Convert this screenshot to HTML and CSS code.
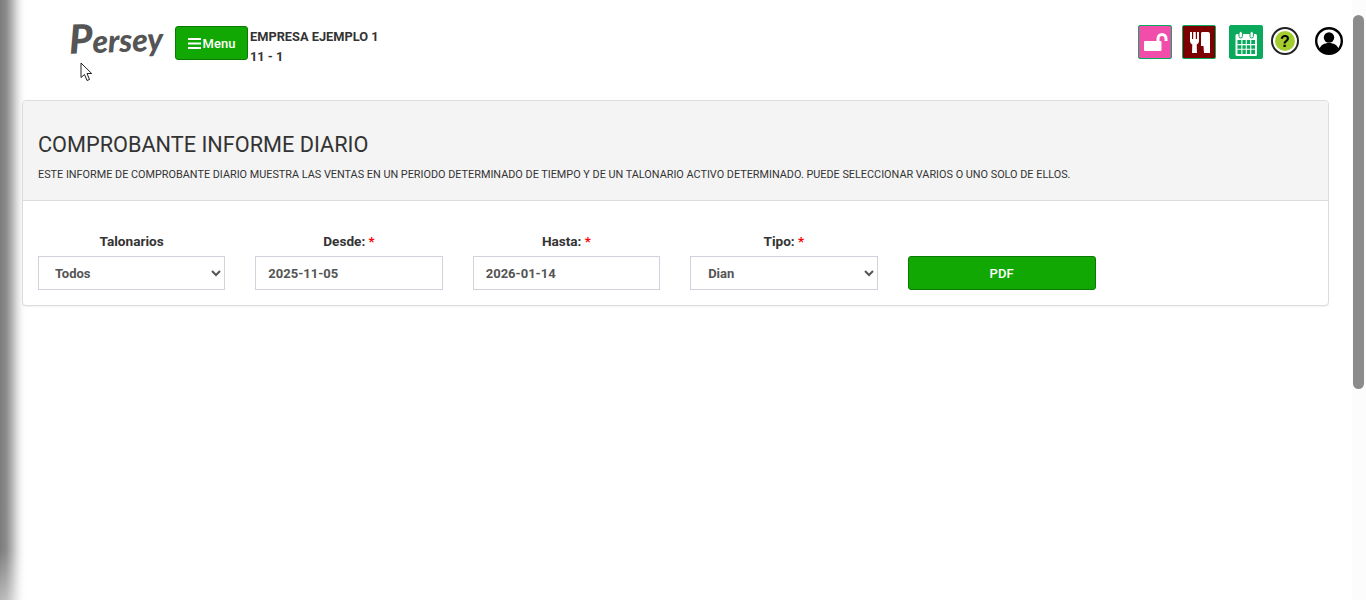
FILE: index.html
```html
<!DOCTYPE html>
<html lang="es">
<head>
<meta charset="utf-8">
<title>Comprobante informe diario</title>
<link rel="stylesheet" href="styles.css">
</head>
<body>
<div class="edge-shadow"></div>
<header class="topbar">
  <div class="brand">
    <span class="logo"><span class="logo-p">P</span>ersey</span>
  </div>
  <button class="btn-menu" type="button">
    <svg class="bars" viewBox="0 0 13 11" width="13" height="11"><path d="M0 1h13M0 5.500h13M0 10h13" stroke="#fff" stroke-width="2"/></svg>Menu
  </button>
  <div class="company">
    <div>EMPRESA EJEMPLO 1</div>
    <div>11 - 1</div>
  </div>
  <nav class="tools">
    <a class="tool tool-pink">
      <svg viewBox="0 0 32 32" width="32" height="32"><path d="M5 16a1 1 0 0 1 1-1h15.500a1 1 0 0 1 1 1v8a1 1 0 0 1-1 1H6a1 1 0 0 1-1-1z" fill="#fff"/><path d="M19 15v-2.500a4 4 0 0 1 8 0V15" fill="none" stroke="#fff" stroke-width="3"/></svg>
    </a>
    <a class="tool tool-red">
      <svg viewBox="0 0 32 32" width="32" height="32"><path d="M7 6h2v7h1.200V6h2.600v7H14V6h2v9c0 2-1.200 3-2.300 3.500L14 27H9l.3-8.500C8.200 18 7 17 7 15z" fill="#fff"/><path d="M19 6h6c1.500 0 2 1 2 2.500V27h-6l-.5-7H18V8c0-1 .3-2 1-2z" fill="#fff"/></svg>
    </a>
    <a class="tool tool-green">
      <svg viewBox="0 0 32 32" width="32" height="32"><rect x="5.500" y="8" width="21.500" height="22" rx="1.500" fill="#fff"/><rect x="9" y="5.500" width="3.400" height="6.500" rx="1.700" fill="#fff" stroke="#0aa95b"/><rect x="20" y="5.500" width="3.400" height="6.500" rx="1.700" fill="#fff" stroke="#0aa95b"/><rect x="7.500" y="14" width="17.500" height="14" fill="#0aa95b"/><path d="M7.500 18.600h17.500M7.500 23.300h17.500M11.900 14v14M16.300 14v14M20.700 14v14" stroke="#fff" stroke-width="1.100"/></svg>
    </a>
    <a class="round round-help">
      <svg viewBox="0 0 28 28" width="28" height="28"><circle cx="14" cy="14" r="13" fill="#fff" stroke="#222" stroke-width="2"/><circle cx="14" cy="14" r="10" fill="#a4cc2e"/><text x="14" y="19.500" text-anchor="middle" class="q">?</text></svg>
    </a>
    <a class="round round-user">
      <svg viewBox="0 0 28 28" width="28" height="28"><circle cx="14" cy="14" r="12.800" fill="#fff" stroke="#000" stroke-width="2.400"/><circle cx="14" cy="10.500" r="5.200" fill="#000"/><path d="M4.500 22c1-4 5-6 9.500-6s8.500 2 9.500 6a12 12 0 0 1-19 0z" fill="#000"/></svg>
    </a>
  </nav>
</header>

<main class="card">
  <section class="card-head">
    <h1>COMPROBANTE INFORME DIARIO</h1>
    <p>ESTE INFORME DE COMPROBANTE DIARIO MUESTRA LAS VENTAS EN UN PERIODO DETERMINADO DE TIEMPO Y DE UN TALONARIO ACTIVO DETERMINADO. PUEDE SELECCIONAR VARIOS O UNO SOLO DE ELLOS.</p>
  </section>
  <form class="card-body">
    <div class="field">
      <label>Talonarios</label>
      <select class="control select-pad"><option>Todos</option></select>
    </div>
    <div class="field">
      <label>Desde: <span class="req">*</span></label>
      <input class="control" type="text" value="2025-11-05">
    </div>
    <div class="field">
      <label>Hasta: <span class="req">*</span></label>
      <input class="control" type="text" value="2026-01-14">
    </div>
    <div class="field">
      <label>Tipo: <span class="req">*</span></label>
      <select class="control select-pad select-tipo"><option>Dian</option></select>
    </div>
    <div class="field">
      <label class="blank">&nbsp;</label>
      <button class="btn-pdf" type="button">PDF</button>
    </div>
  </form>
</main>

<svg class="cursor" viewBox="0 0 13 20" width="13" height="20"><path d="M1 1v14.500l3.500-3 2.500 6 2.500-1-2.500-6h4.700z" fill="#fff" stroke="#222" stroke-width="1"/></svg>
<div class="scrollbar"><div class="thumb"></div></div>
</body>
</html>
```
FILE: styles.css
```css
* { box-sizing: border-box; }
html, body { height: 100%; }
body {
  margin: 0;
  background: #fff;
  color: #333;
  font-family: "Roboto", "Noto Sans", sans-serif;
  font-size: 13px;
  overflow: hidden;
  padding-right: 37px;
  padding-left: 22px;
}
.edge-shadow {
  position: absolute;
  z-index: -1;
  left: 0; top: 0; bottom: 0;
  width: 26px;
  background:
    linear-gradient(to top, rgba(255,255,255,.45), rgba(255,255,255,0) 50px),
    linear-gradient(to right, #7c7c7c 0, #8a8a8a 6px, #b4b4b4 12px, #dcdcdc 17px, #f4f4f4 21px, #fff 25px);
}
.topbar {
  position: relative;
  display: flex;
  align-items: flex-start;
  height: 100px;
}
.brand { width: 153px; padding: 14px 0 0 47px; }
.logo {
  display: block;
  font-family: "Lato", sans-serif;
  font-style: italic;
  font-weight: 900;
  font-size: 32px;
  line-height: 46px;
  letter-spacing: -.2px;
  color: #555;
  white-space: nowrap;
  transform: rotate(-2deg);
}
.logo-p { font-size: 40px; }
.btn-menu {
  margin-top: 26px;
  width: 73px;
  height: 34px;
  background: #12a803;
  border: 1px solid #0c7a02;
  border-radius: 3px;
  color: #fff;
  font: 500 13px "Roboto", sans-serif;
  display: flex;
  align-items: center;
  justify-content: center;
  gap: 2px;
  padding: 0;
}
.bars { display: block; }
.company {
  margin-left: 2px;
  margin-top: 27px;
  font-size: 12.800px;
  font-weight: 700;
  line-height: 20px;
  color: #333;
}
.tools {
  margin-left: auto;
  display: flex;
  align-items: flex-start;
  padding-top: 25px;
  margin-right: -14px;
}
.tool {
  width: 34px;
  height: 34px;
  border-radius: 2px;
  border: 1px solid #0aa95b;
  display: flex;
  align-items: center;
  justify-content: center;
}
.tool svg { display: block; flex: none; }
.tool-pink { background: #f14eab; margin-right: 10px; }
.tool-red { background: #7d0000; margin-right: 13px; }
.tool-green { background: #0aa95b; margin-right: 8px; }
.round { display: block; width: 28px; height: 28px; margin-top: 2px; }
.round svg { display: block; }
.round-help { margin-right: 16px; }
.q { font: 700 16px "Liberation Sans", sans-serif; fill: #000; }
.card {
  background: #fff;
  border: 1px solid #dcdce0;
  border-radius: 4px;
  height: 206px;
  box-shadow: 0 1px 1px rgba(0,0,0,.05);
}
.card-head {
  height: 100px;
  background: #f4f4f4;
  border-bottom: 1px solid #dcdce0;
  border-radius: 4px 4px 0 0;
  padding: 31px 15px 0;
}
h1 {
  margin: 0;
  font-size: 21.700px;
  font-weight: 400;
  line-height: 26px;
  color: #333;
}
.card-head p {
  margin: 8px 0 0;
  font-size: 10.850px;
  line-height: 17px;
  color: #333;
}
.card-body {
  display: grid;
  grid-template-columns: repeat(6, 1fr);
  gap: 30px;
  padding: 32px 15px 0 14.900px;
}
.field { display: flex; flex-direction: column; }
label {
  text-align: center;
  font-weight: 700;
  font-size: 13.600px;
  line-height: 16px;
  height: 23px;
  color: #333;
}
.req { color: #f00; }
.control {
  width: 100%;
  height: 34px;
  border: 1px solid #d2d2dc;
  border-radius: 0;
  background: #fff;
  color: #555;
  font: 700 13px "Roboto", sans-serif;
  padding: 0 12px;
  outline: 0;
}
.select-pad { padding-left: 12px; }
.select-tipo { padding-left: 13px; }
.btn-pdf {
  width: 188px;
  height: 34px;
  background: #12a803;
  border: 1px solid #0c7a02;
  border-radius: 3px;
  color: #fff;
  font: 500 13px "Roboto", sans-serif;
}
.cursor { position: absolute; left: 80px; top: 62px; }
.scrollbar {
  position: absolute;
  right: 0; top: 0; bottom: 0;
  width: 14px;
  background: #fcfcfc;
}
.thumb {
  position: absolute;
  left: 1px; right: 2px;
  top: 15px;
  height: 374px;
  background: #8b8b8b;
  border-radius: 6px;
}
```
